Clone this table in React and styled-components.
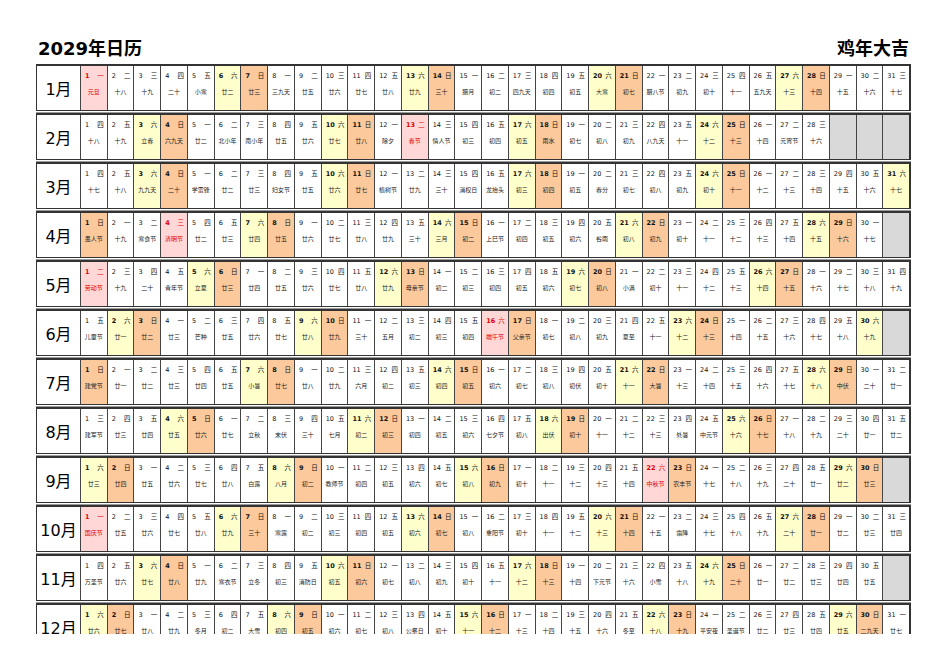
import React from "react";
import styled, { createGlobalStyle } from "styled-components";

const GlobalStyle = createGlobalStyle`
  body {
    margin: 0;
    background: #fff;
    font-family: "DejaVu Sans", "Noto Sans CJK SC", sans-serif;
  }
`;

const Page = styled.div`
  width: 911px;
  height: 634px;
  overflow: hidden;
  padding: 36px 0 0 36px;
  box-sizing: border-box;
`;

const Header = styled.div`
  display: flex;
  justify-content: space-between;
  align-items: flex-end;
  height: 24px;
  margin-bottom: 4px;
  padding: 0 2px;
`;

const Title = styled.div`
  font-size: 18px;
  font-weight: bold;
  line-height: 22px;
  color: #000;
`;

const Table = styled.div`
  display: flex;
  flex-direction: column;
`;

const Row = styled.div`
  display: grid;
  grid-template-columns: 43px repeat(31, 1fr);
  height: 47px;
  box-sizing: border-box;
  border: 1px solid #333;
  border-top-width: 2px;
  border-right-width: 2px;
  margin-bottom: 2px;
  box-shadow: 0 1px 0 #fff, 0 2px 0 #9a9a9a;
`;

const MonthCell = styled.div`
  display: flex;
  align-items: center;
  justify-content: center;
  font-size: 16px;
  color: #000;
  background: #fff;
`;

const DayCell = styled.div`
  border-left: 1px solid #444;
  background: ${(p) => p.$bg};
  display: flex;
  flex-direction: column;
  min-width: 0;
`;

const TopLine = styled.div`
  display: flex;
  justify-content: space-between;
  padding: 5px 3px 0 4px;
  height: 10px;
  font-size: 6.5px;
  line-height: 10px;
  color: ${(p) => (p.$red ? "#e00000" : "#111")};
`;

const Num = styled.span`
  font-weight: ${(p) => (p.$bold ? "bold" : "normal")};
`;

const Lunar = styled.div`
  margin-top: 6px;
  text-align: center;
  font-size: 6px;
  line-height: 10px;
  white-space: nowrap;
  color: ${(p) => (p.$red ? "#e00000" : "#222")};
`;

const LUNAR = [
  "元旦 十八 十九 二十 小寒 廿二 廿三 三九天 廿五 廿六 廿七 廿八 廿九 三十 腊月 初二 四九天 初四 初五 大寒 初七 腊八节 初九 初十 十一 五九天 十三 十四 十五 十六 十七",
  "十八 十九 立春 六九天 廿二 北小年 南小年 廿五 廿六 廿七 廿八 除夕 春节 情人节 初三 初四 初五 雨水 初七 初八 初九 八九天 十一 十二 十三 十四 元宵节 十六",
  "十七 十八 九九天 二十 学雷锋 廿二 廿三 妇女节 廿五 廿六 廿七 植树节 廿九 三十 消权日 龙抬头 初三 初四 初五 春分 初七 初八 初九 初十 十一 十二 十三 十四 十五 十六 十七",
  "愚人节 十九 寒食节 清明节 廿二 廿三 廿四 廿五 廿六 廿七 廿八 廿九 三十 三月 初二 上巳节 初四 初五 初六 谷雨 初八 初九 初十 十一 十二 十三 十四 十五 十六 十七",
  "劳动节 十九 二十 青年节 立夏 廿三 廿四 廿五 廿六 廿七 廿八 廿九 母亲节 初二 初三 初四 初五 初六 初七 初八 小满 初十 十一 十二 十三 十四 十五 十六 十七 十八 十九",
  "儿童节 廿一 廿二 廿三 芒种 廿五 廿六 廿七 廿八 廿九 三十 五月 初二 初三 初四 端午节 父亲节 初七 初八 初九 夏至 十一 十二 十三 十四 十五 十六 十七 十八 十九",
  "建党节 廿一 廿二 廿三 廿四 廿五 小暑 廿七 廿八 廿九 六月 初二 初三 初四 初五 初六 初七 初八 初伏 初十 十一 大暑 十三 十四 十五 十六 十七 十八 中伏 二十 廿一",
  "建军节 廿三 廿四 廿五 廿六 廿七 立秋 末伏 三十 七月 初二 初三 初四 初五 初六 七夕节 初八 出伏 初十 十一 十二 十三 处暑 中元节 十六 十七 十八 十九 二十 廿一 廿二",
  "廿三 廿四 廿五 廿六 廿七 廿八 白露 八月 初二 教师节 初四 初五 初六 初七 初八 初九 初十 十一 十二 十三 十四 中秋节 农丰节 十七 十八 十九 二十 廿一 廿二 廿三",
  "国庆节 廿五 廿六 廿七 廿八 廿九 三十 寒露 初二 初三 初四 初五 初六 初七 初八 重阳节 初十 十一 十二 十三 十四 十五 霜降 十七 十八 十九 二十 廿一 廿二 廿三 廿四",
  "万圣节 廿六 廿七 廿八 廿九 寒衣节 立冬 初三 消防日 初五 初六 初七 初八 初九 初十 十一 十二 十三 十四 下元节 十六 小雪 十八 十九 二十 廿一 廿二 廿三 廿四 廿五",
  "廿六 廿七 廿八 廿九 冬月 初二 大雪 初四 初五 初六 初七 初八 公祭日 初十 十一 十二 十三 十四 十五 十六 冬至 十八 十九 平安夜 圣诞节 廿二 廿三 廿四 廿五 二九天 廿七",
].map((s) => s.split(" "));

const HOLIDAYS = ["1-1", "2-13", "4-4", "5-1", "6-16", "9-22", "10-1"];
const WEEK = ["日", "一", "二", "三", "四", "五", "六"];

function Day({ month, day }) {
  const days = new Date(2029, month + 1, 0).getDate();
  if (day > days) return <DayCell $bg="#d9d9d9" />;
  const wd = new Date(2029, month, day).getDay();
  const holiday = HOLIDAYS.includes(`${month + 1}-${day}`);
  let bg = "#fff";
  if (wd === 6) bg = "#ffffcc";
  if (wd === 0) bg = "#fbc99b";
  if (holiday) bg = "#ffd7d7";
  return (
    <DayCell $bg={bg}>
      <TopLine $red={holiday}>
        <Num $bold={holiday || wd === 0 || wd === 6}>{day}</Num>
        <span>{WEEK[wd]}</span>
      </TopLine>
      <Lunar $red={holiday}>{LUNAR[month][day - 1]}</Lunar>
    </DayCell>
  );
}

export default function App() {
  const cols = Array.from({ length: 31 }, (_, i) => i + 1);
  return (
    <Page>
      <GlobalStyle />
      <Header>
        <Title>2029年日历</Title>
        <Title>鸡年大吉</Title>
      </Header>
      <Table>
        {LUNAR.map((_, m) => (
          <Row key={m}>
            <MonthCell>{m + 1}月</MonthCell>
            {cols.map((d) => (
              <Day key={d} month={m} day={d} />
            ))}
          </Row>
        ))}
      </Table>
    </Page>
  );
}
